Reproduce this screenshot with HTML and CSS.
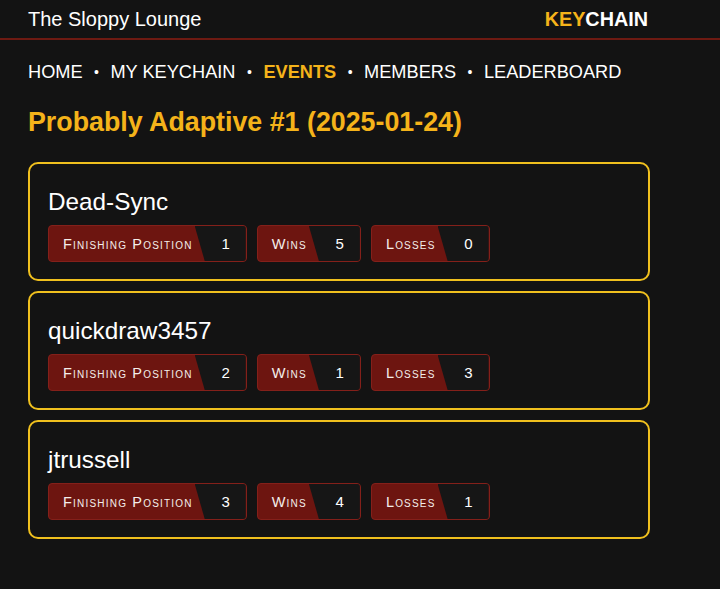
FILE: index.html
```html
<!DOCTYPE html>
<html>
<head>
<meta charset="utf-8">
<link rel="stylesheet" href="styles.css">
</head>
<body>
<header class="topbar">
  <div class="brand">The Sloppy Lounge</div>
  <div class="logo"><span class="key">KEY</span>CHAIN</div>
</header>
<main class="main">
  <nav class="nav">
    <a class="nav-link">HOME</a><span class="dot">•</span>
    <a class="nav-link">MY KEYCHAIN</a><span class="dot">•</span>
    <a class="nav-link active">EVENTS</a><span class="dot">•</span>
    <a class="nav-link">MEMBERS</a><span class="dot">•</span>
    <a class="nav-link">LEADERBOARD</a>
  </nav>
  <h1 class="title">Probably Adaptive #1 (2025-01-24)</h1>
  <div class="cards">
    <section class="card">
      <h2 class="name">Dead-Sync</h2>
      <div class="badges">
        <div class="badge"><span class="label">Finishing Position</span><span class="value">1</span></div>
        <div class="badge"><span class="label">Wins</span><span class="value">5</span></div>
        <div class="badge"><span class="label">Losses</span><span class="value">0</span></div>
      </div>
    </section>
    <section class="card">
      <h2 class="name">quickdraw3457</h2>
      <div class="badges">
        <div class="badge"><span class="label">Finishing Position</span><span class="value">2</span></div>
        <div class="badge"><span class="label">Wins</span><span class="value">1</span></div>
        <div class="badge"><span class="label">Losses</span><span class="value">3</span></div>
      </div>
    </section>
    <section class="card">
      <h2 class="name">jtrussell</h2>
      <div class="badges">
        <div class="badge"><span class="label">Finishing Position</span><span class="value">3</span></div>
        <div class="badge"><span class="label">Wins</span><span class="value">4</span></div>
        <div class="badge"><span class="label">Losses</span><span class="value">1</span></div>
      </div>
    </section>
  </div>
</main>
</body>
</html>
```
FILE: styles.css
```css
html, body {
  margin: 0;
  padding: 0;
  background: #131313;
  color: #ffffff;
  font-family: "Liberation Sans", Arial, sans-serif;
}
.topbar {
  display: flex;
  justify-content: space-between;
  align-items: center;
  height: 38px;
  padding: 0 72px 0 28px;
  border-bottom: 2px solid #6e1a12;
}
.brand {
  font-size: 20px;
}
.logo {
  font-size: 19.8px;
  font-weight: bold;
}
.key {
  color: #f5b31a;
}
.main {
  width: 622px;
  padding: 0 28px;
}
.nav {
  display: flex;
  align-items: center;
  margin-top: 20px;
  font-size: 18.2px;
  line-height: 24px;
}
.nav-link {
  color: #ffffff;
}
.nav-link.active {
  color: #f5b31a;
  font-weight: bold;
}
.dot {
  font-size: 14px;
  margin: 0 11.5px;
}
.title {
  margin: 23px 0 0 0;
  font-size: 26.8px;
  line-height: 30px;
  color: #f5b31a;
}
.cards {
  display: flex;
  flex-direction: column;
  gap: 10px;
  margin-top: 25px;
}
.card {
  border: 2px solid #f0c01e;
  border-radius: 10px;
  padding: 23px 18px 17px 18px;
}
.name {
  margin: 0 0 8px 0;
  font-size: 24.3px;
  font-weight: normal;
  line-height: 30px;
}
.badges {
  display: flex;
  gap: 10px;
}
.badge {
  display: flex;
  align-items: stretch;
  height: 35px;
  background: #6d1510;
  border: 1px solid #84201a;
  border-radius: 4px;
  overflow: hidden;
}
.label {
  display: flex;
  align-items: center;
  padding: 0 2px 0 14px;
  font-size: 14.5px;
  letter-spacing: 1.2px;
  font-variant: small-caps;
  color: #f4eeea;
}
.value {
  display: flex;
  align-items: center;
  justify-content: flex-end;
  width: 51px;
  padding-right: 16px;
  box-sizing: border-box;
  background: #161616;
  font-size: 15px;
  clip-path: polygon(0 0, 100% 0, 100% 100%, 10px 100%);
}
```
